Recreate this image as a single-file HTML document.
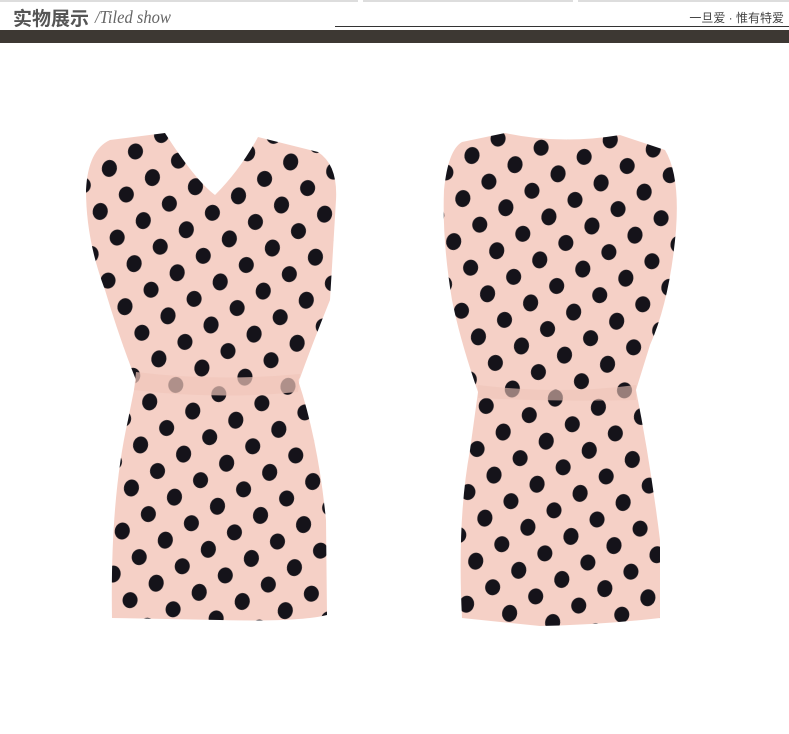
<!DOCTYPE html>
<html><head><meta charset="utf-8"><style>
html,body{margin:0;padding:0;background:#fff;width:789px;height:734px;overflow:hidden;position:relative;font-family:"Liberation Sans","Noto Sans CJK SC",sans-serif}
.t1{position:absolute;left:13px;top:4px;font-size:19px;font-weight:bold;color:#555;letter-spacing:0}
.t2{position:absolute;left:95px;top:7px;font-family:"Liberation Serif",serif;font-style:italic;font-size:18px;color:#666;transform:scaleX(0.92);transform-origin:left}
.t3{position:absolute;right:5px;top:9px;font-size:12px;color:#444}
.ln{position:absolute;left:335px;right:0;top:26px;height:1px;background:#333}
.bar{position:absolute;left:0;right:0;top:30px;height:13px;background:#3d3833}
.topl{position:absolute;top:0;height:2px;background:#ddd}
</style></head><body>
<div class="topl" style="left:0;width:358px"></div>
<div class="topl" style="left:363px;width:210px"></div>
<div class="topl" style="left:578px;width:211px"></div>
<div class="t1">实物展示</div>
<div class="t2">/Tiled show</div>
<div class="t3">一旦爱 · 惟有特爱</div>
<div class="ln"></div>
<div class="bar"></div>
<svg width="789" height="734" style="position:absolute;left:0;top:0">
<defs>
<pattern id="d" width="44" height="44" patternUnits="userSpaceOnUse" patternTransform="rotate(12)">
<rect width="44" height="44" fill="#f5d0c6"/>
<ellipse cx="10" cy="10" rx="7.5" ry="8.5" fill="#15131a"/>
<ellipse cx="32" cy="32" rx="7.5" ry="8" fill="#15131a"/>
</pattern>
</defs>
<path d="M110 140 L165 133 Q195 180 215 195 Q240 170 258 137 L318 152 Q338 165 336 200 L330 300 Q312 345 300 378 L298 380 Q318 440 326 520 L327 615 Q300 622 220 620 L112 618 Q110 500 128 420 L136 380 Q120 340 105 290 Q86 240 86 190 Q88 150 110 140Z" fill="url(#d)"/>
<path d="M136 372 Q215 382 300 374 L298 392 Q215 400 134 390Z" fill="#f1c6bb" opacity="0.7"/>
<path d="M462 142 L505 133 Q560 145 620 135 L665 150 Q680 175 676 230 Q670 300 650 345 L636 390 Q650 460 660 540 L660 618 Q600 625 540 626 L462 618 Q457 520 470 450 L478 392 Q460 340 452 300 Q442 240 444 190 Q448 150 462 142Z" fill="url(#d)"/>
<path d="M478 385 Q560 395 636 385 L636 400 Q560 402 478 398Z" fill="#efc4b9" opacity="0.6"/>
</svg>
</body></html>
